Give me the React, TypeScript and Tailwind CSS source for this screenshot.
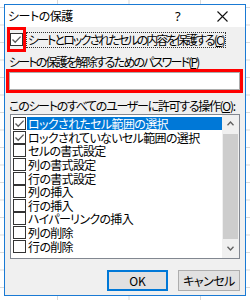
import React from "react";

const FF = "font-['Noto_Sans_CJK_JP',sans-serif] [font-feature-settings:'palt'] text-[12px] text-black whitespace-nowrap";
const F = `${FF} leading-[14px]`;

function Box({ checked }: { checked: boolean }) {
  return (
    <div className="w-[13px] h-[13px] border border-[#333333] bg-white flex items-center justify-center shrink-0">
      {checked && (
        <svg width="11" height="11" viewBox="0 0 11 11">
          <path d="M1.5 5.5 L4.2 8.3 L9.6 2.6" fill="none" stroke="#5a5a5a" strokeWidth="1.3" />
        </svg>
      )}
    </div>
  );
}

const items: [string, boolean][] = [
  ["ロックされたセル範囲の選択", true],
  ["ロックされていないセル範囲の選択", true],
  ["セルの書式設定", false],
  ["列の書式設定", false],
  ["行の書式設定", false],
  ["列の挿入", false],
  ["行の挿入", false],
  ["ハイパーリンクの挿入", false],
  ["列の削除", false],
  ["行の削除", false],
];

export default function App() {
  return (
    <div className="relative w-[250px] h-[300px] overflow-hidden bg-white [background-image:linear-gradient(#d9d9d9_1px,transparent_1px),linear-gradient(90deg,#d9d9d9_1px,transparent_1px)] [background-size:71.5px_17.5px] [background-position:57px_7px]">
      <div className="absolute left-[4px] top-[4px] w-[242px] h-[292px] border border-[#1a7ad4] bg-[#f0f0f0] flex flex-col">
        {/* title bar */}
        <div className="h-[22px] bg-white flex items-center shrink-0 relative">
          <span className={`${F} ml-[3px] tracking-[-0.5px]`}>シートの保護</span>
          <span className="absolute left-[170px] top-[2px] font-['Noto_Sans',sans-serif] text-[13px] leading-[18px] text-black">?</span>
          <svg className="absolute left-[212px] top-[6px]" width="11" height="11" viewBox="0 0 11 11">
            <path d="M0.5 0.5 L10.5 10.5 M10.5 0.5 L0.5 10.5" stroke="#111" strokeWidth="1.1" />
          </svg>
        </div>
        {/* row 1 */}
        <div className="flex items-center h-[25px] ml-[2px] shrink-0">
          <div className="w-[19px] h-[25px] border-[3px] border-[#ff0000] flex items-center justify-center">
            <Box checked />
          </div>
          <span className={`${F} ml-[1px] outline outline-1 outline-dotted outline-[#333] px-[1px] tracking-[-1.9px]`}>
            シートとロックされたセルの内容を保護する(<span className="underline">C</span>)
          </span>
        </div>
        <div className={`${F} mt-[3px] ml-[4px] tracking-[-1.8px]`}>
          シートの保護を解除するためのパスワード(<span className="underline">P</span>)
        </div>
        <div className="ml-[1px] w-[237px] h-[24px] border-[3px] border-[#ff0000] shrink-0">
          <div className="w-full h-full bg-white border border-[#acacac]" />
        </div>
        <div className={`${F} mt-[6px] ml-[4px] tracking-[-1.3px]`}>
          このシートのすべてのユーザーに許可する操作(<span className="underline">O</span>):
        </div>
        {/* list */}
        <div className="ml-[5px] mt-[1px] w-[230px] h-[145px] border border-[#828790] bg-white flex shrink-0">
          <div className="flex-1 pt-[2px]">
            {items.map(([t, c], i) => (
              <div key={t} className="flex items-center h-[13.6px] pl-[2px]">
                <Box checked={c} />
                <span
                  className={`${FF} flex-1 ml-[1px] pl-[1px] leading-[13px] tracking-[-0.65px] ${
                    i === 0 ? "bg-[#0078d7] text-white" : ""
                  }`}
                >
                  {t}
                </span>
              </div>
            ))}
          </div>
          <div className="w-[17px] bg-[#f0f0f0] flex flex-col">
            <div className="h-[17px] flex items-center justify-center">
              <svg width="7" height="5" viewBox="0 0 7 5">
                <path d="M0.5 4.2 L3.5 1 L6.5 4.2" fill="none" stroke="#606060" strokeWidth="1.3" />
              </svg>
            </div>
            <div className="mx-[1px] mt-[2px] h-[105px] bg-[#cdcdcd]" />
            <div className="flex-1 flex items-center justify-center">
              <svg width="7" height="5" viewBox="0 0 7 5">
                <path d="M0.5 0.8 L3.5 4 L6.5 0.8" fill="none" stroke="#606060" strokeWidth="1.3" />
              </svg>
            </div>
          </div>
        </div>
        {/* buttons */}
        <div className="flex justify-end gap-[10px] mt-[11px] pr-[5px]">
          <div className={`${F} w-[61px] h-[21px] border-2 border-[#0078d7] bg-[#e1e1e1] flex items-center justify-center`}>OK</div>
          <div className={`${F} w-[62px] h-[21px] border border-[#adadad] bg-[#e1e1e1] flex items-center justify-center tracking-[-0.5px]`}>キャンセル</div>
        </div>
      </div>
    </div>
  );
}
